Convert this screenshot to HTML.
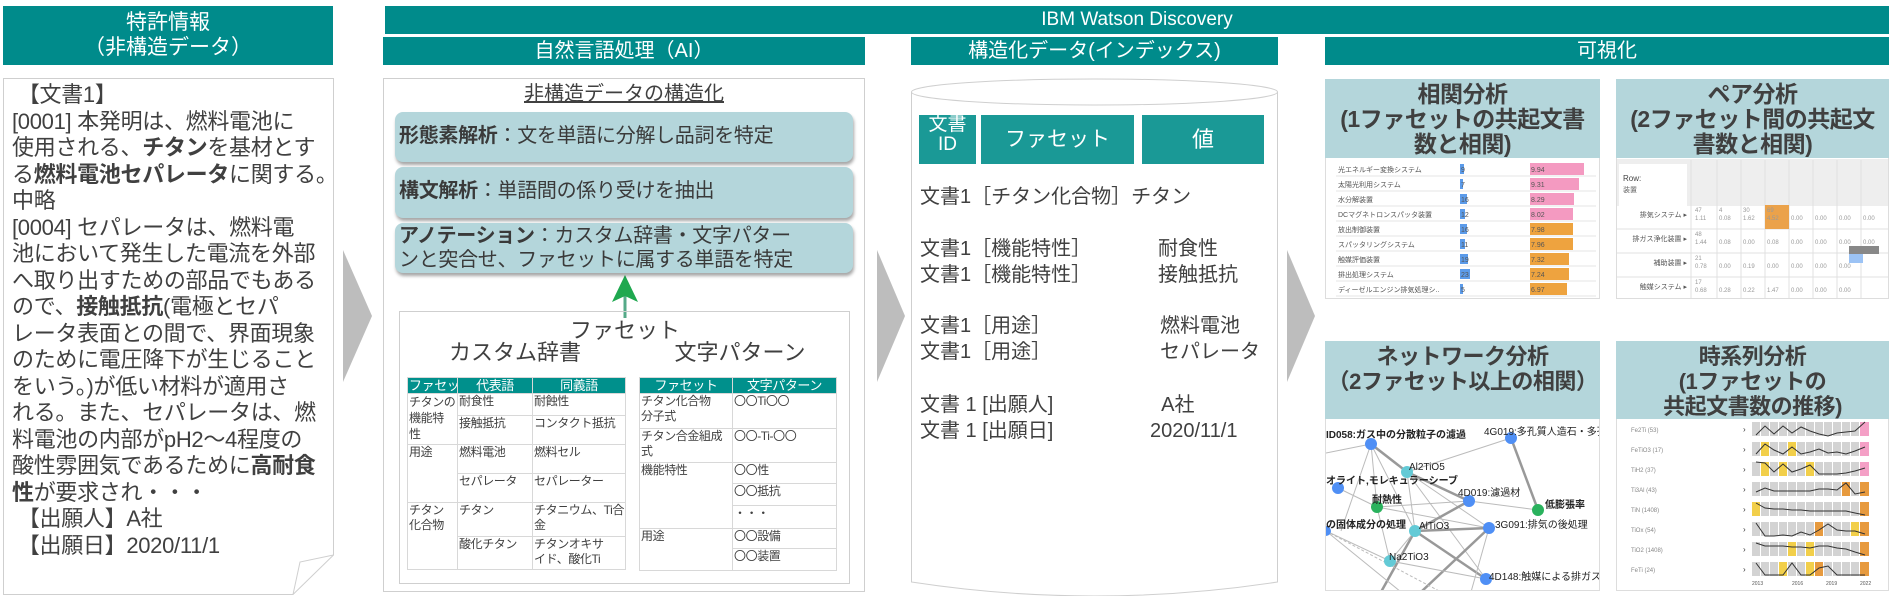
<!DOCTYPE html>
<html><head><meta charset="utf-8">
<style>
*{margin:0;padding:0;box-sizing:border-box}
body{width:1894px;height:596px;background:#fff;position:relative;overflow:hidden;font-family:"Liberation Sans","Noto Sans CJK JP",sans-serif;color:#404040}
.a{position:absolute}
.teal{background:#008b8b;color:#fff;text-align:center}
.doc{font-size:22px;line-height:26.5px;letter-spacing:-0.3px;white-space:nowrap}
.pill{position:absolute;left:395px;width:458px;background:#b4d6db;border-radius:8px;box-shadow:1px 3px 3px rgba(0,0,0,.35);font-size:20px;color:#3a3a3a;padding-left:4px;letter-spacing:-0.3px}
table{border-collapse:collapse;position:absolute;font-size:12px;line-height:15px;color:#404040;table-layout:fixed;letter-spacing:-0.4px}
td,th{border:1px solid #d8d8d8;vertical-align:top;padding:0 1px;text-align:left;white-space:nowrap;overflow:hidden}
th{background:#00908c;color:#fff;font-weight:normal;text-align:center;height:15px;font-size:13px}
.vh{position:absolute;background:#b4d6db;color:#404040;font-weight:bold;text-align:center;font-size:23px;line-height:25px;letter-spacing:-0.5px}
.vb{position:absolute;border:1px solid #ddd;background:#fff;overflow:hidden}
</style></head><body>

<div class="a teal" style="left:3px;top:6px;width:330px;height:59px;font-size:21px;line-height:25px;padding-top:4px">特許情報<br>（非構造データ）</div>
<div class="a teal" style="left:385px;top:6px;width:1504px;height:28px;font-size:19px;line-height:28px;">IBM Watson Discovery</div>
<div class="a teal" style="left:383px;top:37px;width:482px;height:28px;font-size:20px;line-height:28px">自然言語処理（AI）</div>
<div class="a teal" style="left:911px;top:37px;width:367px;height:28px;font-size:20px;line-height:28px">構造化データ(インデックス)</div>
<div class="a teal" style="left:1325px;top:37px;width:564px;height:28px;font-size:20px;line-height:28px">可視化</div>

<svg class="a" style="left:0;top:0" width="1894" height="596">
<path d="M3.5 78.5 H333.5 V555 L293 594.5 H3.5 Z" fill="#fff" stroke="#cfcfcf"/>
<path d="M333.5 555 L300 562 L293 594.5" fill="none" stroke="#cfcfcf"/>
<polygon points="343,250 372,316 343,382" fill="#bdbdbd"/>
<polygon points="877,250 905,316 877,382" fill="#bdbdbd"/>
<polygon points="1287,250 1315,316 1287,382" fill="#bdbdbd"/>
<rect x="383.5" y="78.5" width="481" height="513" fill="none" stroke="#cfcfcf"/>
<path d="M911.5 92 V582 Q1094 610 1277.5 582 V92" fill="#fff" stroke="#cfcfcf"/>
<ellipse cx="1094.5" cy="92" rx="183" ry="13" fill="#fff" stroke="#cfcfcf"/>
<line x1="625" y1="285" x2="625" y2="318" stroke="#5a8" stroke-width="3"/>
<polygon points="625,275 612,302 625,296 638,302" fill="#1fa84f"/>
</svg>

<div class="a doc" style="left:12px;top:82px">
&nbsp;【文書1】<br>
[0001] 本発明は、燃料電池に<br>
使用される、<b>チタン</b>を基材とす<br>
る<b>燃料電池セパレータ</b>に関する。<br>
中略<br>
[0004] セパレータは、燃料電<br>
池において発生した電流を外部<br>
へ取り出すための部品でもある<br>
ので、<b>接触抵抗</b>(電極とセパ<br>
レータ表面との間で、界面現象<br>
のために電圧降下が生じること<br>
をいう。)が低い材料が適用さ<br>
れる。また、セパレータは、燃<br>
料電池の内部がpH2～4程度の<br>
酸性雰囲気であるために<b>高耐食</b><br>
<b>性</b>が要求され・・・<br>
&nbsp;【出願人】A社<br>
&nbsp;【出願日】2020/11/1
</div>

<div class="a" style="left:383px;top:80px;width:482px;text-align:center;font-size:20px;text-decoration:underline;line-height:28px">非構造データの構造化</div>
<div class="pill" style="top:112px;height:50px;line-height:48px"><b>形態素解析</b>：文を単語に分解し品詞を特定</div>
<div class="pill" style="top:167px;height:51px;line-height:48px"><b>構文解析</b>：単語間の係り受けを抽出</div>
<div class="pill" style="top:223px;height:50px;line-height:24px;padding-top:1px"><b>アノテーション</b>：カスタム辞書・文字パター<br>ンと突合せ、ファセットに属する単語を特定</div>

<div class="a" style="left:399px;top:311px;width:451px;height:273px;border:1px solid #cfcfcf"></div>
<div class="a" style="left:560px;top:318px;width:130px;text-align:center;font-size:22px;line-height:26px;white-space:nowrap">ファセット</div>
<div class="a" style="left:440px;top:340px;width:150px;text-align:center;font-size:22px;line-height:26px;white-space:nowrap">カスタム辞書</div>
<div class="a" style="left:665px;top:340px;width:150px;text-align:center;font-size:22px;line-height:26px;white-space:nowrap">文字パターン</div>

<table style="left:407px;top:377px;width:218px">
<colgroup><col style="width:50px"><col style="width:75px"><col style="width:93px"></colgroup>
<tr><th>ファセット</th><th>代表語</th><th>同義語</th></tr>
<tr><td rowspan="2" style="line-height:16px">チタンの<br>機能特<br>性</td><td style="height:22px">耐食性</td><td>耐蝕性</td></tr>
<tr><td style="height:29px">接触抵抗</td><td>コンタクト抵抗</td></tr>
<tr><td rowspan="2">用途</td><td style="height:29px">燃料電池</td><td>燃料セル</td></tr>
<tr><td style="height:29px">セパレータ</td><td>セパレーター</td></tr>
<tr><td rowspan="2">チタン<br>化合物</td><td style="height:34px">チタン</td><td>チタニウム、Ti合<br>金</td></tr>
<tr><td style="height:33px">酸化チタン</td><td>チタンオキサ<br>イド、酸化Ti</td></tr>
</table>

<table style="left:639px;top:377px;width:197px">
<colgroup><col style="width:93px"><col style="width:104px"></colgroup>
<tr><th>ファセット</th><th>文字パターン</th></tr>
<tr><td style="height:35px">チタン化合物<br>分子式</td><td>〇〇Ti〇〇</td></tr>
<tr><td style="height:34px">チタン合金組成<br>式</td><td>〇〇-Ti-〇〇</td></tr>
<tr><td rowspan="3">機能特性</td><td style="height:21px">〇〇性</td></tr>
<tr><td style="height:22px">〇〇抵抗</td></tr>
<tr><td style="height:23px">・・・</td></tr>
<tr><td rowspan="2">用途</td><td style="height:20px">〇〇設備</td></tr>
<tr><td style="height:22px">〇〇装置</td></tr>
</table>

<div class="a teal" style="left:919px;top:115px;width:57px;height:49px;font-size:19px;line-height:20px;background:#1a9996">文書<br>ID</div>
<div class="a teal" style="left:981px;top:115px;width:153px;height:49px;font-size:21px;line-height:49px;background:#1a9996">ファセット</div>
<div class="a teal" style="left:1142px;top:115px;width:122px;height:49px;font-size:22px;line-height:49px;background:#1a9996">値</div>
<div class="a" style="left:920px;top:184px;font-size:20px;line-height:26px;white-space:nowrap">文書1［チタン化合物］チタン</div>
<div class="a" style="left:920px;top:236px;font-size:20px;line-height:26px;white-space:nowrap">文書1［機能特性］<br>文書1［機能特性］</div>
<div class="a" style="left:1158px;top:236px;font-size:20px;line-height:26px;white-space:nowrap">耐食性<br>接触抵抗</div>
<div class="a" style="left:920px;top:313px;font-size:20px;line-height:26px;white-space:nowrap">文書1［用途］<br>文書1［用途］</div>
<div class="a" style="left:1160px;top:313px;font-size:20px;line-height:26px;white-space:nowrap">燃料電池<br>セパレータ</div>
<div class="a" style="left:920px;top:392px;font-size:20px;line-height:26px;white-space:nowrap">文書 1 [出願人]<br>文書 1 [出願日]</div>
<div class="a" style="left:1150px;top:392px;font-size:20px;line-height:26px;white-space:nowrap">&nbsp;&nbsp;A社<br>2020/11/1</div>

<div class="vb" style="left:1325px;top:79px;width:275px;height:220px">
<svg width="275" height="220" style="position:absolute;left:0;top:0">
<g font-size="7" fill="#555">
<g transform="translate(0,82)">
<line x1="10" y1="14" x2="270" y2="14" stroke="#e4e4e4"/>
<text x="12" y="10">光エネルギー変換システム</text><rect x="134" y="2" width="4" height="10" fill="#5b9bea"/><text x="135" y="10">9</text><rect x="204" y="1" width="54" height="12" fill="#f49ac1"/><text x="205" y="10">9.94</text>
</g>
<g transform="translate(0,97)"><line x1="10" y1="14" x2="270" y2="14" stroke="#e4e4e4"/><text x="12" y="10">太陽光利用システム</text><rect x="134" y="2" width="3" height="10" fill="#5b9bea"/><text x="135" y="10">7</text><rect x="204" y="1" width="49" height="12" fill="#f49ac1"/><text x="205" y="10">9.31</text></g>
<g transform="translate(0,112)"><line x1="10" y1="14" x2="270" y2="14" stroke="#e4e4e4"/><text x="12" y="10">水分解装置</text><rect x="134" y="2" width="7" height="10" fill="#5b9bea"/><text x="135" y="10">16</text><rect x="204" y="1" width="44" height="12" fill="#f49ac1"/><text x="205" y="10">8.29</text></g>
<g transform="translate(0,127)"><line x1="10" y1="14" x2="270" y2="14" stroke="#e4e4e4"/><text x="12" y="10">DCマグネトロンスパッタ装置</text><rect x="134" y="2" width="5" height="10" fill="#5b9bea"/><text x="135" y="10">12</text><rect x="204" y="1" width="43" height="12" fill="#f49ac1"/><text x="205" y="10">8.02</text></g>
<g transform="translate(0,142)"><line x1="10" y1="14" x2="270" y2="14" stroke="#e4e4e4"/><text x="12" y="10">放出制御装置</text><rect x="134" y="2" width="7" height="10" fill="#5b9bea"/><text x="135" y="10">16</text><rect x="204" y="1" width="43" height="12" fill="#eea33f"/><text x="205" y="10">7.98</text></g>
<g transform="translate(0,157)"><line x1="10" y1="14" x2="270" y2="14" stroke="#e4e4e4"/><text x="12" y="10">スパッタリングシステム</text><rect x="134" y="2" width="5" height="10" fill="#5b9bea"/><text x="135" y="10">11</text><rect x="204" y="1" width="43" height="12" fill="#eea33f"/><text x="205" y="10">7.96</text></g>
<g transform="translate(0,172)"><line x1="10" y1="14" x2="270" y2="14" stroke="#e4e4e4"/><text x="12" y="10">触媒評価装置</text><rect x="134" y="2" width="8" height="10" fill="#5b9bea"/><text x="135" y="10">19</text><rect x="204" y="1" width="39" height="12" fill="#eea33f"/><text x="205" y="10">7.32</text></g>
<g transform="translate(0,187)"><line x1="10" y1="14" x2="270" y2="14" stroke="#e4e4e4"/><text x="12" y="10">排出処理システム</text><rect x="134" y="2" width="10" height="10" fill="#5b9bea"/><text x="135" y="10">23</text><rect x="204" y="1" width="39" height="12" fill="#eea33f"/><text x="205" y="10">7.24</text></g>
<g transform="translate(0,202)"><line x1="10" y1="14" x2="270" y2="14" stroke="#e4e4e4"/><text x="12" y="10">ディーゼルエンジン排気処理シ..</text><rect x="134" y="2" width="3" height="10" fill="#5b9bea"/><text x="135" y="10">5</text><rect x="204" y="1" width="37" height="12" fill="#eea33f"/><text x="205" y="10">6.97</text></g>
</g></svg>
</div>
<div class="vh" style="left:1325px;top:79px;width:275px;height:79px;padding-top:3px">相関分析<br>(1ファセットの共起文書<br>数と相関)</div>

<div class="vb" style="left:1616px;top:79px;width:273px;height:220px">
<svg width="273" height="220" style="position:absolute;left:0;top:0">
<rect x="0" y="79" width="273" height="47" fill="#eeeeee"/>
<rect x="2" y="84" width="68" height="42" fill="#fff"/>
<text x="6" y="101" font-size="8" fill="#444">Row:</text><text x="6" y="112" font-size="7" fill="#666">装置</text>
<g stroke="#e0e0e0"><line x1="74" y1="80" x2="74" y2="220"/><line x1="100" y1="80" x2="100" y2="220"/><line x1="124" y1="80" x2="124" y2="220"/><line x1="148" y1="80" x2="148" y2="220"/><line x1="172" y1="80" x2="172" y2="220"/><line x1="196" y1="80" x2="196" y2="220"/><line x1="220" y1="80" x2="220" y2="220"/><line x1="244" y1="80" x2="244" y2="220"/>
<line x1="0" y1="149" x2="273" y2="149"/><line x1="0" y1="173" x2="273" y2="173"/><line x1="0" y1="197" x2="273" y2="197"/></g>
<rect x="148" y="125" width="24" height="24" fill="#eba24a"/>
<rect x="232" y="166" width="30" height="8" fill="#888"/><rect x="232" y="174" width="14" height="9" fill="#9cc3f5"/>
<g font-size="6" fill="#999">
<text x="78" y="132">47</text><text x="78" y="140">1.11</text><text x="102" y="132">4</text><text x="102" y="140">0.08</text><text x="126" y="132">30</text><text x="126" y="140">1.62</text><text x="150" y="132">69</text><text x="150" y="140">4.52</text><text x="174" y="140">0.00</text><text x="198" y="140">0.00</text><text x="222" y="140">0.00</text><text x="246" y="140">0.00</text>
<text x="78" y="156">48</text><text x="78" y="164">1.44</text><text x="102" y="164">0.08</text><text x="126" y="164">0.00</text><text x="150" y="164">0.08</text><text x="174" y="164">0.00</text><text x="198" y="164">0.00</text><text x="222" y="164">0.00</text><text x="246" y="164">0.00</text>
<text x="78" y="180">21</text><text x="78" y="188">0.78</text><text x="102" y="188">0.00</text><text x="126" y="188">0.19</text><text x="150" y="188">0.00</text><text x="174" y="188">0.00</text><text x="198" y="188">0.00</text><text x="222" y="188">0.00</text>
<text x="78" y="204">17</text><text x="78" y="212">0.68</text><text x="102" y="212">0.28</text><text x="126" y="212">0.22</text><text x="150" y="212">1.47</text><text x="174" y="212">0.00</text><text x="198" y="212">0.00</text><text x="222" y="212">0.00</text>
</g>
<g font-size="7" fill="#555" text-anchor="end"><text x="70" y="137">排気システム ▸</text><text x="70" y="161">排ガス浄化装置 ▸</text><text x="70" y="185">補助装置 ▸</text><text x="70" y="209">触媒システム ▸</text></g>
</svg>
</div>
<div class="vh" style="left:1616px;top:79px;width:273px;height:79px;padding-top:3px">ペア分析<br>(2ファセット間の共起文<br>書数と相関)</div>

<div class="vb" style="left:1325px;top:341px;width:275px;height:250px">
<svg width="275" height="250" style="position:absolute;left:0;top:0" font-family="Liberation Sans,Noto Sans CJK JP,sans-serif">
<g stroke="#bbb" stroke-width="1" transform="translate(-1325,-341)">
<line x1="1325" y1="452" x2="1370" y2="443"/><line x1="1370" y1="443" x2="1406" y2="471" stroke-width="2.5" stroke="#999"/><line x1="1370" y1="443" x2="1376" y2="506"/><line x1="1370" y1="443" x2="1414" y2="530"/><line x1="1370" y1="443" x2="1340" y2="530"/>
<line x1="1406" y1="471" x2="1510" y2="437"/><line x1="1406" y1="471" x2="1468" y2="500" stroke-width="2.5" stroke="#999"/><line x1="1406" y1="471" x2="1485" y2="578"/><line x1="1406" y1="471" x2="1414" y2="530"/><line x1="1406" y1="471" x2="1488" y2="527"/>
<line x1="1510" y1="437" x2="1537" y2="509" stroke-width="2.5" stroke="#999"/>
<line x1="1337" y1="487" x2="1376" y2="506"/><line x1="1376" y1="506" x2="1468" y2="500"/><line x1="1376" y1="506" x2="1488" y2="527"/><line x1="1376" y1="506" x2="1389" y2="560"/>
<line x1="1468" y1="500" x2="1537" y2="509"/><line x1="1468" y1="500" x2="1414" y2="530" stroke-width="2.5" stroke="#999"/>
<line x1="1414" y1="530" x2="1488" y2="527" stroke-width="2.5" stroke="#999"/><line x1="1414" y1="530" x2="1485" y2="578" stroke-width="2.5" stroke="#999"/><line x1="1414" y1="530" x2="1380" y2="591" stroke-width="2.5" stroke="#999"/>
<line x1="1488" y1="527" x2="1420" y2="591" stroke-width="2.5" stroke="#999"/><line x1="1488" y1="527" x2="1470" y2="591"/>
<line x1="1325" y1="530" x2="1389" y2="560"/><line x1="1325" y1="530" x2="1400" y2="591"/><line x1="1325" y1="530" x2="1440" y2="591" stroke-dasharray="3 2"/>
<line x1="1389" y1="560" x2="1485" y2="578"/><line x1="1389" y1="560" x2="1414" y2="530"/>
<g stroke="none">
<circle cx="1370" cy="443" r="6" fill="#4f8ff5"/><circle cx="1510" cy="437" r="6" fill="#4f8ff5"/><circle cx="1406" cy="471" r="6" fill="#63cad6"/><circle cx="1337" cy="487" r="6" fill="#4f8ff5"/><circle cx="1376" cy="506" r="6" fill="#2ab25d"/><circle cx="1468" cy="500" r="6" fill="#4f8ff5"/><circle cx="1537" cy="509" r="6" fill="#2ab25d"/><circle cx="1414" cy="530" r="6" fill="#63cad6"/><circle cx="1488" cy="527" r="6" fill="#4f8ff5"/><circle cx="1325" cy="530" r="5" fill="#4f8ff5"/><circle cx="1389" cy="560" r="6" fill="#63cad6"/><circle cx="1485" cy="578" r="6" fill="#4f8ff5"/>
</g>
<g stroke="none" font-size="10" fill="#222" font-weight="bold">
<text x="1325" y="437">ID058:ガス中の分散粒子の濾過</text>
<text x="1483" y="434" font-weight="normal">4G019:多孔質人造石・多孔</text>
<text x="1408" y="469" font-weight="normal">Al2TiO5</text>
<text x="1325" y="483">オライト,モレキュラーシーブ</text>
<text x="1457" y="495" font-weight="normal">4D019:濾過材</text>
<text x="1371" y="502">耐熱性</text>
<text x="1544" y="507">低膨張率</text>
<text x="1325" y="527">の固体成分の処理</text>
<text x="1418" y="528" font-weight="normal">AlTiO3</text>
<text x="1494" y="527" font-weight="normal">3G091:排気の後処理</text>
<text x="1388" y="559" font-weight="normal">Na2TiO3</text>
<text x="1488" y="579" font-weight="normal">4D148:触媒による排ガス</text>
</g>
</g>
</svg>
</div>
<div class="vh" style="left:1325px;top:341px;width:275px;height:78px;padding-top:3px;font-size:22px">ネットワーク分析<br>（2ファセット以上の相関）</div>

<div class="vb" style="left:1616px;top:341px;width:273px;height:250px">
<svg width="273" height="250" style="position:absolute;left:0;top:0">
<defs><pattern id="cells" x="135" y="0" width="9" height="20" patternUnits="userSpaceOnUse"><rect x="0" y="0" width="8" height="20" fill="#d3d3d3"/></pattern></defs>
<g transform="translate(0,80)">
<g font-size="6" fill="#888">
<text x="14" y="10">Fe2Ti (53)</text><text x="14" y="30">FeTiO3 (17)</text><text x="14" y="50">TiH2 (37)</text><text x="14" y="70">Ti3Al (43)</text><text x="14" y="90">TiN (1408)</text><text x="14" y="110">TiOx (54)</text><text x="14" y="130">TiO2 (1408)</text><text x="14" y="150">FeTi (24)</text>
</g>
<g font-size="8" fill="#333"><text x="126" y="10">›</text><text x="126" y="30">›</text><text x="126" y="50">›</text><text x="126" y="70">›</text><text x="126" y="90">›</text><text x="126" y="110">›</text><text x="126" y="130">›</text><text x="126" y="150">›</text></g>
<rect x="135" y="0" width="117" height="14" fill="url(#cells)"/>
<rect x="135" y="20" width="117" height="14" fill="url(#cells)"/>
<rect x="135" y="40" width="117" height="14" fill="url(#cells)"/>
<rect x="135" y="60" width="117" height="14" fill="url(#cells)"/>
<rect x="135" y="80" width="117" height="14" fill="url(#cells)"/>
<rect x="135" y="100" width="117" height="14" fill="url(#cells)"/>
<rect x="135" y="120" width="117" height="14" fill="url(#cells)"/>
<rect x="135" y="140" width="117" height="14" fill="url(#cells)"/>
<g fill="#f4a0c6"><rect x="243" y="0" width="9" height="14"/><rect x="243" y="20" width="9" height="14"/><rect x="243" y="40" width="9" height="14"/></g>
<g fill="#f2cf4a"><rect x="144" y="20" width="8" height="14"/><rect x="171" y="20" width="8" height="14"/><rect x="144" y="40" width="8" height="14"/><rect x="162" y="40" width="8" height="14"/><rect x="189" y="40" width="8" height="14"/><rect x="135" y="80" width="8" height="14"/><rect x="234" y="100" width="8" height="14"/><rect x="171" y="120" width="8" height="14"/><rect x="189" y="120" width="8" height="14"/><rect x="162" y="140" width="8" height="14"/><rect x="189" y="140" width="8" height="14"/></g>
<g fill="#e79a3e"><rect x="225" y="60" width="8" height="14"/><rect x="243" y="60" width="9" height="14"/><rect x="243" y="80" width="9" height="14"/><rect x="198" y="100" width="8" height="14"/><rect x="243" y="100" width="9" height="14"/><rect x="243" y="120" width="9" height="14"/><rect x="198" y="140" width="8" height="14"/><rect x="243" y="140" width="9" height="14"/></g>
<g fill="none" stroke="#333" stroke-width="1">
<polyline points="139,13 148,4 157,12 166,4 175,11 184,5 193,9 202,12 211,14 220,11 229,10 238,9 248,0"/>
<polyline points="139,32 148,22 157,28 166,32 175,25 184,32 193,30 202,27 211,31 220,30 229,32 238,29 248,25"/>
<polyline points="139,40 148,41 157,50 166,42 175,50 184,47 193,43 202,52 211,52 220,52 229,51 238,49 248,46"/>
<polyline points="139,70 148,66 157,69 166,69 175,69 184,69 193,69 202,67 211,67 220,68 229,61 238,72 248,70"/>
<polyline points="139,81 148,86 157,87 166,87 175,88 184,88 193,89 202,89 211,89 220,89 229,89 238,91 248,93"/>
<polyline points="139,101 148,114 157,114 166,113 175,114 184,110 193,113 202,108 211,102 220,108 229,109 238,109 248,112"/>
<polyline points="139,121 148,124 157,124 166,124 175,125 184,125 193,126 202,124 211,124 220,126 229,127 238,130 248,133"/>
<polyline points="139,141 148,153 157,153 166,153 175,141 184,153 193,153 202,146 211,144 220,153 229,153 238,153 248,153"/>
</g>
<g font-size="5" fill="#555"><text x="135" y="163">2013</text><text x="175" y="163">2016</text><text x="209" y="163">2019</text><text x="243" y="163">2022</text></g>
</g>
</svg>
</div>
<div class="vh" style="left:1616px;top:341px;width:273px;height:78px;padding-top:3px;font-size:22px;line-height:25px">時系列分析<br>(1ファセットの<br>共起文書数の推移)</div>

</body></html>
